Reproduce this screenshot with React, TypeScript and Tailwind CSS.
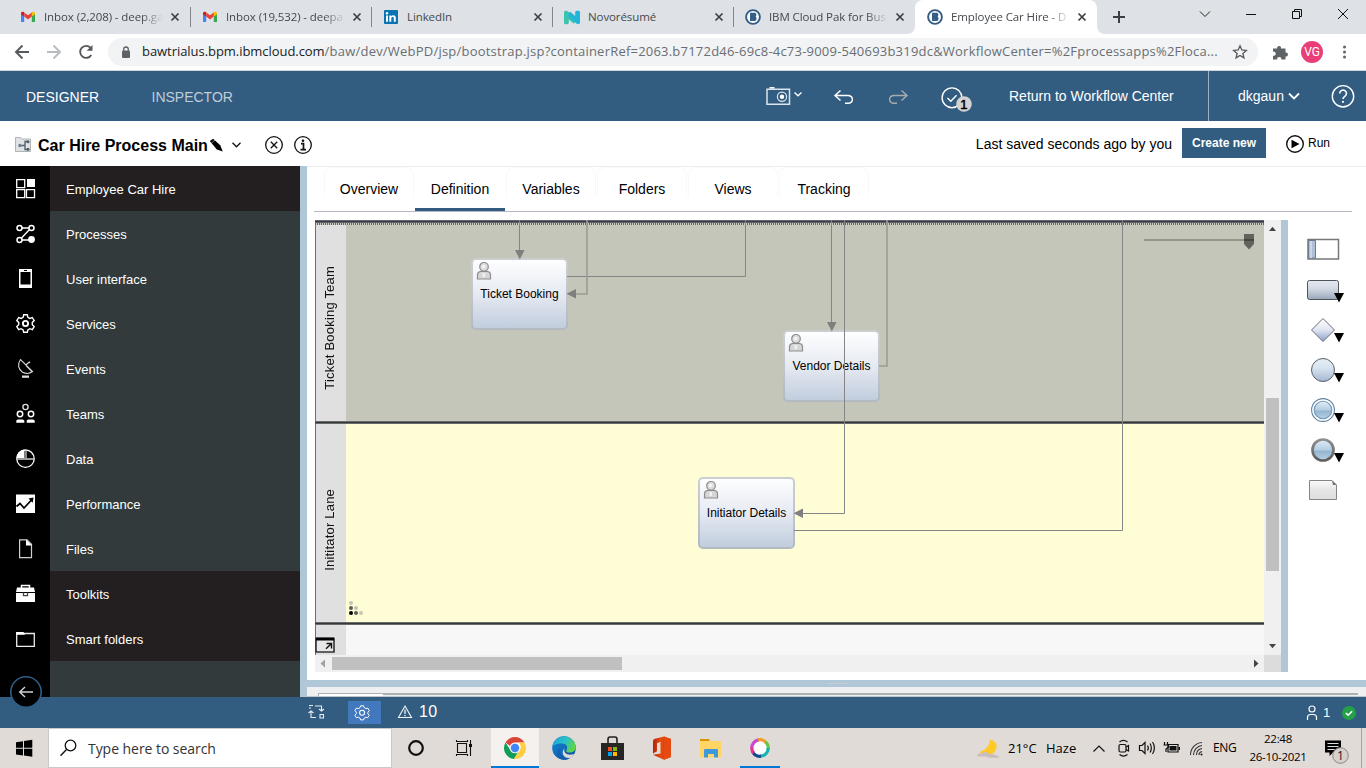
import React from 'react';

type IcoProps = { x?: number; y?: number; w: number; h: number; className?: string; children: React.ReactNode };

function Ico({ x = 0, y = 0, w, h, className = '', children }: IcoProps) {
  return (
    <svg width={w} height={h} viewBox={`${x} ${y} ${w} ${h}`} fill="none" className={`block shrink-0 ${className}`}>
      {children}
    </svg>
  );
}

/* ---------- Browser chrome ---------- */

const Gmail = () => (
  <Ico w={14} h={14}>
    <path d="M0 3.200v8.800h3.200V6z" fill="#4285f4" />
    <path d="M14 3.200v8.800h-3.200V6z" fill="#34a853" />
    <path d="M0 3.400C0 1.800 1.800 1.300 3 2.200l.2.2v4.200L0 4.300z" fill="#c5221f" />
    <path d="M14 3.400c0-1.600-1.800-2.100-3-1.200l-.2.2v4.200L14 4.300z" fill="#fbbc04" />
    <path d="M3.200 2.400 7 5.200l3.800-2.800v4.200L7 9.400 3.200 6.600z" fill="#ea4335" />
  </Ico>
);

const LinkedIn = () => (
  <Ico w={14} h={14}>
    <rect width="14" height="14" rx="1" fill="#0a73b1" />
    <path d="M2 5.400h2v6.400H2zM5.300 5.400h1.900v.9c.4-.7 1.100-1.100 2-1.100 2 0 2.600 1.200 2.600 3v3.600h-2V8.600c0-1-.2-1.700-1.100-1.700-1 0-1.400.7-1.400 1.700v3.200h-2z" fill="#fff" />
    <circle cx="3" cy="3.300" r="1.200" fill="#fff" />
  </Ico>
);

const Novo = () => (
  <Ico w={16} h={15}>
    <path d="M0 13V2.500C0 .8 2.500.2 4 1.400L11 8v4.500L9.500 13.500 4.800 9.500V13c0 1.800-4.800 1.800-4.800 0z" fill="#3cc3b0" />
    <path d="M16 2v10.500c0 1.700-2.300 2.300-3.500 1.100L4.800 7V2.500L6.500 2l4.700 4V2c0-1.700 4.800-1.700 4.800 0z" fill="#21b6d7" />
  </Ico>
);

const IbmB = () => (
  <Ico w={16} h={16}>
    <circle cx="8" cy="8" r="6.900" fill="#fff" stroke="#325c86" strokeWidth="1.900" />
    <path d="M5 3.800h4.500c2 0 2.500 2.800 1 4 1.800 1 1.200 4.300-1.200 4.300H5z" fill="#325c86" />
    <path d="M5.500 5.900h3M5.500 10h3" stroke="#4f7499" strokeWidth=".6" />
  </Ico>
);

const tabs = [
  { icon: <Gmail />, title: 'Inbox (2,208) - deep.ga', fade: true },
  { icon: <Gmail />, title: 'Inbox (19,532) - deepa', fade: true },
  { icon: <LinkedIn />, title: 'LinkedIn', fade: false },
  { icon: <Novo />, title: 'Novorésumé', fade: false },
  { icon: <IbmB />, title: 'IBM Cloud Pak for Bus', fade: true },
  { icon: <IbmB />, title: 'Employee Car Hire - D', fade: true },
];

function TabStrip() {
  return (
    <div className="flex h-[34px] bg-[#dee1e6] pl-[9px]">
      {tabs.map((t, i) => {
        const active = i === 5;
        const shell = active
          ? 'relative flex h-full w-[182px] items-center rounded-t-lg bg-white pl-[12px]'
          : i === 0
            ? 'relative flex h-full w-[182px] items-center pl-[11px]'
            : 'relative flex h-full w-[181px] items-center pl-[11px]';
        return (
          <div key={i} className={shell}>
            {active && (
              <Ico w={198} h={8} className="absolute -left-2 bottom-0">
                <path d="M0 8c4.500 0 8-3.500 8-8v8zM198 8c-4.500 0-8-3.500-8-8v8z" fill="#fff" />
              </Ico>
            )}
            <div className="flex w-4 justify-center">{t.icon}</div>
            <div
              className={
                t.fade
                  ? 'ml-2 w-[119px] overflow-hidden text-[11.5px] tracking-[-0.1px] whitespace-nowrap text-[#45494d] [mask-image:linear-gradient(to_right,black_82%,transparent)]'
                  : 'ml-2 w-[119px] overflow-hidden text-[11.5px] tracking-[-0.1px] whitespace-nowrap text-[#45494d]'
              }
            >
              {t.title}
            </div>
            <Ico w={10} h={10} className="ml-[7px]">
              <path d="M1.500 1.500l7 7M8.500 1.500l-7 7" stroke="#3c4043" strokeWidth="1.700" />
            </Ico>
            {i < 4 && <div className="absolute top-[7px] right-0 h-5 w-px bg-[#82868b]" />}
          </div>
        );
      })}
      <Ico x={1097} y={0} w={269} h={34}>
        <path d="M1119 11v12M1113 17h12" stroke="#3c4043" strokeWidth="2" />
        <path d="M1200 11.500l5 5 5-5" stroke="#222" />
        <path d="M1246 14.500h10" stroke="#111" />
        <path d="M1292.500 11.500h7v7h-7zM1294.500 11v-1.500h7v7h-1.500" stroke="#111" />
        <path d="M1338 9l10 10M1348 9l-10 10" stroke="#111" />
      </Ico>
    </div>
  );
}

function Toolbar() {
  return (
    <div className="flex h-[37px] items-center border-b border-[#d3d6d9] bg-white">
      <Ico x={0} y={34} w={108} h={36}>
        <path d="M29 52H16.500M22.500 45.500L16 52l6.500 6.500" stroke="#55595d" strokeWidth="1.900" />
        <path d="M47 52h12.500M53.500 45.500L60 52l-6.500 6.500" stroke="#b9bcbf" strokeWidth="1.900" />
        <path d="M91.300 55a6 6 0 1 1-.8-7.300" stroke="#55595d" strokeWidth="1.900" />
        <path d="M92.500 45v5.800h-5.800z" fill="#55595d" />
      </Ico>
      <div className="flex h-7 w-[1150px] items-center rounded-full bg-[#f1f3f4] pl-[13px]">
        <Ico w={10} h={13}>
          <rect x="1" y="4.500" width="8" height="7.500" rx="1" fill="#5f6368" />
          <path d="M2.700 5V3.300a2.300 2.300 0 0 1 4.600 0V5" stroke="#5f6368" strokeWidth="1.300" />
        </Ico>
        <div className="ml-[11px] w-[1088px] text-[13px] tracking-[0.215px] whitespace-nowrap text-[#6a6e73]">
          <span className="tracking-[-0.05px] text-[#202124]">bawtrialus.bpm.ibmcloud.com</span>
          /baw/dev/WebPD/jsp/bootstrap.jsp?containerRef=2063.b7172d46-69c8-4c73-9009-540693b319dc&amp;WorkflowCenter=%2Fprocessapps%2Floca...
        </div>
        <Ico w={16} h={16} className="ml-[2px]">
          <path d="M8 1.800l1.800 4.200 4.500.4-3.400 3 1 4.400L8 11.500l-3.900 2.300 1-4.400-3.400-3L6.200 6z" stroke="#55595d" strokeWidth="1.300" />
        </Ico>
      </div>
      <Ico x={1258} y={34} w={108} h={36}>
        <path d="M1273 48.500h4.200a2 2 0 1 1 3.800 0h4.500v4a2 2 0 1 1 0 3.900v3.100h-4.300a2 2 0 1 0-3.900 0H1273v-3.800a2.100 2.100 0 1 0 0-4z" fill="#5f6368" />
        <circle cx="1312" cy="52" r="11" fill="#ea3f76" />
        <text x="1312" y="56.300" fontSize="12" textAnchor="middle" fill="#fff" fontFamily="Roboto, sans-serif">VG</text>
        <circle cx="1344.500" cy="47" r="1.500" fill="#5f6368" />
        <circle cx="1344.500" cy="52" r="1.500" fill="#5f6368" />
        <circle cx="1344.500" cy="57" r="1.500" fill="#5f6368" />
      </Ico>
    </div>
  );
}

/* ---------- Designer header ---------- */

function DesignerHeader() {
  return (
    <div className="flex h-[50px] items-center bg-[#325c80] text-[14px] text-white">
      <div className="ml-[26px] w-[125.5px] pt-[3px]">DESIGNER</div>
      <div className="w-[608.5px] pt-[3px] text-[#c0ccd8]">INSPECTOR</div>
      <Ico x={760} y={71} w={249} h={50}>
        <path d="M767 89.200h22.500v15H767z" stroke="#dbe4ec" strokeWidth="1.500" />
        <path d="M769.500 87.800h5" stroke="#fff" strokeWidth="1.500" />
        <circle cx="782" cy="96.800" r="4.600" stroke="#dfe7ee" strokeWidth="1.200" />
        <circle cx="782" cy="96.800" r="2.200" fill="#fff" />
        <path d="M794.500 92.500l3.500 3.300 3.500-3.300" stroke="#fff" strokeWidth="1.300" />
        <path d="M840.500 90.500l-5.500 5 5.500 5M835.500 95.500h13a5 4 0 0 1 0 7.800H845" stroke="#fff" strokeWidth="1.500" />
        <path d="M901.500 90.500l5.500 5-5.500 5M906.500 95.500h-13a5 4 0 0 0 0 7.800H897" stroke="#a9acae" strokeWidth="1.400" />
        <circle cx="952" cy="97.800" r="9.900" stroke="#fff" strokeWidth="1.400" />
        <path d="M947.500 98l3.300 3.200 5.800-6" stroke="#fff" strokeWidth="1.400" />
        <circle cx="964" cy="104" r="7.800" fill="#d2d2d2" />
        <text x="963.800" y="108.800" fontSize="13" textAnchor="middle" fill="#000" stroke="#000" strokeWidth=".5">1</text>
      </Ico>
      <div className="w-[199px]">Return to Workflow Center</div>
      <div className="h-full w-px bg-[#9fb1c1]" />
      <div className="ml-[29px]">dkgaun</div>
      <Ico x={1284} y={71} w={82} h={50} className="ml-auto">
        <path d="M1289 93.500l5 5 5-5" stroke="#fff" strokeWidth="1.800" />
        <circle cx="1343" cy="96.300" r="10.700" stroke="#fff" strokeWidth="1.400" />
        <path d="M1339.700 93.500a3.400 3.300 0 1 1 5.300 2.600c-1.300.9-2 1.500-2 3" stroke="#fff" strokeWidth="1.600" />
        <circle cx="1343" cy="101.800" r="1.100" fill="#fff" />
      </Ico>
    </div>
  );
}

function TitleRow() {
  return (
    <div className="flex h-[45px] items-center bg-white text-black">
      <Ico x={14} y={136} w={18} h={18} className="ml-[14px]">
        <path d="M15.500 152.500v-14h5l1 1.500h9v12.500z" fill="#dfe1e4" stroke="#b0b3b6" />
        <path d="M21.500 146.500h3M28.500 142.500H25v8h3.500" stroke="#4e5c6b" strokeWidth="1.300" />
        <circle cx="20" cy="146.500" r="1.700" fill="#6d7a88" />
        <circle cx="28" cy="142.800" r="1.500" fill="#4e5c6b" />
        <circle cx="28" cy="150.300" r="1.500" fill="#4e5c6b" />
      </Ico>
      <div className="ml-[6px] w-[170px] pt-[4px] text-[16px] leading-5 font-bold whitespace-nowrap">Car Hire Process Main</div>
      <Ico x={208} y={121} w={110} h={45}>
        <path d="M209.800 141l3.400-2.200 7 6.500 2.600 6.200-6-2z" fill="#000" />
        <path d="M211.500 143l3.500-3" stroke="#fff" strokeWidth=".5" />
        <path d="M232.500 142.800l4 4 4-4" stroke="#111" strokeWidth="1.300" />
        <circle cx="274" cy="145" r="8.300" stroke="#111" strokeWidth="1.300" />
        <path d="M270.800 141.800l6.400 6.400M277.200 141.800l-6.400 6.400" stroke="#111" strokeWidth="1.300" />
        <circle cx="303" cy="145" r="8.300" stroke="#111" strokeWidth="1.300" />
        <path d="M301 143.700h2.500v6M300.500 149.700h5.500" stroke="#111" strokeWidth="1.700" />
        <circle cx="303" cy="140.800" r="1.300" fill="#111" />
      </Ico>
      <div className="ml-auto pt-[2px] text-[14px]">Last saved seconds ago by you</div>
      <div className="mt-[7px] mr-5 ml-[10px] flex h-[30px] w-[84px] items-center justify-center self-start bg-[#325c80] text-[12px] font-bold text-white">Create new</div>
      <Ico x={1286} y={134} w={18} h={20}>
        <circle cx="1295" cy="144" r="8.300" stroke="#111" strokeWidth="1.400" />
        <path d="M1291.500 139.800l8 4.200-8 4.200z" fill="#000" />
      </Ico>
      <div className="mr-[36px] ml-1 pb-px text-[12px]">Run</div>
    </div>
  );
}

/* ---------- Side navigation ---------- */

const navItems = [
  { label: 'Employee Car Hire', dark: true, icon: (
    <>
      <path d="M16.700 13.700h8v8h-8zM16.700 23.700h8v8h-8zM26.500 23.700h8v8h-8z" stroke="#fff" strokeWidth="1.300" />
      <path d="M27 13h8v8h-8z" fill="#fff" />
    </>
  ) },
  { label: 'Processes', dark: false, icon: (
    <>
      <path d="M22 17h7M29.500 18.500l-8 8.500M22 29h7" stroke="#fff" strokeWidth="1.400" />
      <circle cx="19.500" cy="17" r="2.500" stroke="#fff" strokeWidth="1.500" />
      <circle cx="31.500" cy="17" r="2.500" stroke="#fff" strokeWidth="1.500" />
      <circle cx="19.500" cy="29" r="2.500" stroke="#fff" strokeWidth="1.500" />
      <circle cx="31.500" cy="28.500" r="3.400" fill="#fff" />
    </>
  ) },
  { label: 'User interface', dark: false, icon: (
    <>
      <path d="M19 13h13v19H19z" fill="#fff" />
      <path d="M20.500 16h10v12.500h-10z" fill="#000" />
      <path d="M24 14.500h3" stroke="#000" />
    </>
  ) },
  { label: 'Services', dark: false, icon: (
    <>
      <path d="M23.700 13.800h3.600l.6 2.500 2 1.100 2.400-.9 1.900 3.100-1.900 1.800v2.300l1.900 1.800-1.900 3.100-2.400-.9-2 1.200-.6 2.400h-3.600l-.6-2.400-2-1.200-2.400.9-1.900-3.100 1.900-1.800v-2.300l-1.900-1.800 1.900-3.100 2.400.9 2-1.100z" stroke="#fff" strokeWidth="1.400" />
      <circle cx="25.500" cy="22.500" r="2.600" stroke="#fff" strokeWidth="1.900" />
    </>
  ) },
  { label: 'Events', dark: false, icon: (
    <>
      <path d="M20.500 13.500c-3.500 5-2 10 2 12.800 4 1.800 7.500 1.300 10-.8zM25.800 19l3.700-3M26 19.500l5.500 5.500M29 15.500l1 1.500" stroke="#d8d8d8" strokeWidth="1.100" />
      <path d="M22 29.500h7v2.300h-7z" fill="#ddd" />
    </>
  ) },
  { label: 'Teams', dark: false, icon: (
    <>
      <circle cx="25.500" cy="16" r="2.600" stroke="#ddd" strokeWidth="1.400" />
      <circle cx="20" cy="23" r="2.700" stroke="#fff" strokeWidth="1.500" />
      <circle cx="31" cy="23" r="2.700" stroke="#fff" strokeWidth="1.500" />
      <path d="M16.300 31.800v-2.300l1.500-1h5l1.500 1v2.300zM26.700 31.800v-2.300l1.500-1h5l1.500 1v2.300z" fill="#fff" />
    </>
  ) },
  { label: 'Data', dark: false, icon: (
    <>
      <circle cx="25.500" cy="22.700" r="8.700" stroke="#fff" strokeWidth="1.300" />
      <path d="M24.500 22V13.600a9 9 0 0 0-8 8.400z" fill="#fff" />
      <path d="M17 23h17.500M26 14v8" stroke="#ccc" strokeWidth="1.300" />
    </>
  ) },
  { label: 'Performance', dark: false, icon: (
    <>
      <path d="M16 13.500h19v18.500H16z" fill="#fff" />
      <path d="M16.500 25.500l3.500-3 4 4.500 7.500-8" stroke="#000" strokeWidth="1.800" />
      <path d="M28.500 17.500l5-1-.8 5.200z" fill="#000" />
    </>
  ) },
  { label: 'Files', dark: false, icon: (
    <>
      <path d="M19.600 13.800h7.400l4.500 4.500v13.300H19.600z" stroke="#cfcfcf" strokeWidth="1.200" />
      <path d="M26 13.500l6 6h-6z" fill="#fff" />
    </>
  ) },
  { label: 'Toolkits', dark: true, icon: (
    <>
      <path d="M21.500 17v-2.500h8V17" stroke="#fff" strokeWidth="1.500" />
      <path d="M17 16.500h17l1 4.500H16zM16 22h19v9H16z" fill="#fff" />
      <path d="M23.500 21.500v3.200h4v-3.200" stroke="#444" strokeWidth="1.300" />
    </>
  ) },
  { label: 'Smart folders', dark: true, icon: (
    <>
      <path d="M16.700 17.500h17.600v12.800H16.700z" stroke="#ececec" strokeWidth="1.300" />
      <path d="M16 16h7.500l1.500 2.800h-9z" fill="#fff" />
    </>
  ) },
];

function SideNav() {
  return (
    <div className="relative z-10 flex h-full w-[300px] shrink-0 flex-col bg-[#323a3b]">
      {navItems.map((n) => (
        <div key={n.label} className="flex h-[45px]">
          <Ico w={50} h={45} className="bg-black">{n.icon}</Ico>
          <div className={n.dark ? 'flex flex-1 items-center bg-[#231f20] pt-[3px] pl-4 text-[13px] text-white' : 'flex flex-1 items-center pt-[3px] pl-4 text-[13px] text-white'}>{n.label}</div>
        </div>
      ))}
      <div className="w-[50px] flex-1 bg-black" />
      <Ico w={34} h={34} className="absolute top-[509px] left-[9px]">
        <circle cx="17" cy="17" r="15.200" fill="#000" stroke="#2f5f88" strokeWidth="1.600" />
        <path d="M24 17H11M16 12l-5.300 5 5.300 5" stroke="#cfd3d6" strokeWidth="1.400" />
      </Ico>
    </div>
  );
}

/* ---------- Diagram ---------- */

const nodes = [
  { label: 'Ticket Booking', pos: 'left-[156px] top-[38px]' },
  { label: 'Vendor Details', pos: 'left-[468px] top-[110px]' },
  { label: 'Initiator Details', pos: 'left-[383px] top-[257px]' },
];

function LaneLabel({ text, className }: { text: string; className: string }) {
  return (
    <div className={`flex w-[31px] shrink-0 items-center justify-center border-l border-[#6f6f6f] bg-[#e0e0e0] pr-[3px] ${className}`}>
      <span className="rotate-180 text-[13px] tracking-[0.2px] whitespace-nowrap text-[#111] [writing-mode:vertical-rl]">{text}</span>
    </div>
  );
}

function Diagram() {
  return (
    <div className="relative flex h-[435px] w-[949px] flex-col overflow-hidden">
      <div className="h-[3px] border-y border-[#60636a] bg-[#3c3f49]" />
      <div className="h-[2px] bg-[repeating-linear-gradient(90deg,#66645f_0px,#66645f_1px,#cfcfc8_1px,#cfcfc8_2px)]" />
      <div className="flex h-[196px] bg-[#c5c6ba]">
        <LaneLabel text="Ticket Booking Team" className="pt-[10px]" />
      </div>
      <div className="h-[3px] border-y border-[#696b6b] bg-[#34373c]" />
      <div className="flex h-[198px] bg-[#fffdd5]">
        <LaneLabel text="Inititator Lane" className="pt-[14px]" />
      </div>
      <div className="h-[3px] border-y border-[#696b6b] bg-[#34373c]" />
      <div className="flex h-[30px] bg-[#f7f7f7]">
        <div className="w-[31px] border-l border-[#6f6f6f] bg-[#e0e0e0]" />
      </div>

      {nodes.map((n) => (
        <div key={n.label} className={`absolute h-[72px] w-[97px] rounded-[5px] border-2 border-[#a9adb3]/60 bg-linear-to-b from-white via-[#e6eaf2] to-[#bfcbdc] bg-origin-border ${n.pos}`}>
          <Ico w={16} h={19} className="mt-px ml-[3px]">
            <path d="M1.500 18v-4c0-2.200 1.500-3.300 3.600-3.600h5.800c2.100.3 3.600 1.400 3.600 3.600v4z" fill="#d6d6d6" stroke="#8d8d8d" strokeWidth="1.200" />
            <circle cx="8" cy="5.800" r="4.300" fill="#dedede" stroke="#8d8d8d" strokeWidth="1.200" />
            <circle cx="7.500" cy="5.500" r="1.800" fill="#f4f4f4" />
            <path d="M6.500 12h2.500v4H6.500z" fill="#f0f0f0" />
          </Ico>
          <div className="mt-[6px] text-center text-[12px] leading-4 whitespace-nowrap text-black">{n.label}</div>
        </div>
      ))}

      <Ico x={315} y={220} w={949} h={435} className="absolute inset-0">
        <g stroke="#858585">
          <path d="M519.500 220v32M567 276.500h178.500V220M831.500 220v104M844.500 220v293.500H802M794 530.500h328.500V220" />
        </g>
        <path d="M587 220v74h-12M887 220v146h-8" stroke="#9b9b96" strokeWidth="1.600" />
        <g fill="#7f7f7f">
          <path d="M515 250h9.500l-4.700 9.500zM827 322h9.500l-4.700 9.500zM576 289v9.500l-9.500-4.700zM803 508.500v9.500l-9.500-4.700z" />
        </g>
        <path d="M1144 240h100" stroke="#95958d" strokeWidth="2" />
        <path d="M1244 234h10v10l-5 5.500-5-5.500z" fill="#62635d" />
        <path d="M1244 240h10" stroke="#45463f" strokeWidth="2" />
        <g>
          <circle cx="351" cy="603" r="2" fill="#c6c5b7" />
          <circle cx="351" cy="608" r="2" fill="#5d5c56" />
          <circle cx="356" cy="608" r="2" fill="#c3c2b6" />
          <circle cx="351" cy="613" r="2" fill="#000" />
          <circle cx="356" cy="613" r="2" fill="#5d5c56" />
          <circle cx="361" cy="613" r="2" fill="#c6c5b7" />
        </g>
        <path d="M316 638.500h18V652h-18z" fill="#e8e8e8" stroke="#333" strokeWidth="1.600" />
        <path d="M316 639h18" stroke="#000" strokeWidth="3" />
        <path d="M326.500 643.500h5v5M331 644l-5 4.800" stroke="#111" strokeWidth="1.400" />
      </Ico>
    </div>
  );
}

function Arrow({ x, y }: { x: number; y: number }) {
  return <path d={`M${x} ${y}h10l-5 9.500z`} fill="#000" />;
}

function Palette() {
  return (
    <div className="flex flex-col pt-[10px]">
      <svg width="0" height="0" className="absolute">
        <defs>
          <linearGradient id="gTask" x2="0" y2="1"><stop stopColor="#e4e8f0" /><stop offset=".4" stopColor="#d6dce6" /><stop offset="1" stopColor="#98a6ba" /></linearGradient>
          <linearGradient id="gGate" x2="0" y2="1"><stop stopColor="#fff" /><stop offset=".5" stopColor="#e0e5f2" /><stop offset="1" stopColor="#8a9ec8" /></linearGradient>
          <linearGradient id="gCirc" x2="0" y2="1"><stop stopColor="#e4eef6" /><stop offset=".4" stopColor="#d8e4ef" /><stop offset="1" stopColor="#a5b7d0" /></linearGradient>
          <linearGradient id="gBlue" x2="0" y2="1"><stop stopColor="#e2edf8" /><stop offset=".5" stopColor="#b4cee2" /><stop offset=".55" stopColor="#94b5d0" /><stop offset="1" stopColor="#b5d2e6" /></linearGradient>
          <linearGradient id="gNote" x2="0" y2="1"><stop stopColor="#fafafa" /><stop offset=".5" stopColor="#e6e6e6" /><stop offset="1" stopColor="#ddd" /></linearGradient>
          <linearGradient id="gRing" x2="0" y2="1"><stop stopColor="#8f8f8f" /><stop offset="1" stopColor="#5e5e5e" /></linearGradient>
        </defs>
      </svg>
      <Ico x={1288} y={230} w={78} h={40}>
        <path d="M1308 239.500h30.500v19.500H1308z" fill="#fff" stroke="#777" strokeWidth="1.500" />
        <path d="M1308.500 240.500h7v17.500h-7z" fill="#aebfd6" stroke="#6f7a8a" />
        <path d="M1311 241v17" stroke="#c9d6e6" strokeWidth="2" />
      </Ico>
      <Ico x={1288} y={270} w={78} h={40}>
        <rect x="1307.500" y="280.500" width="31" height="19" rx="2" fill="url(#gTask)" stroke="#4e5459" />
        <Arrow x={1334} y={293} />
      </Ico>
      <Ico x={1288} y={310} w={78} h={40}>
        <path d="M1323 318.500l11.500 11.500-11.500 11.500-11.500-11.500z" fill="url(#gGate)" stroke="#666b75" />
        <Arrow x={1334} y={333} />
      </Ico>
      <Ico x={1288} y={350} w={78} h={40}>
        <circle cx="1323" cy="370" r="11.500" fill="url(#gCirc)" stroke="#5a6068" />
        <Arrow x={1334} y={373} />
      </Ico>
      <Ico x={1288} y={390} w={78} h={40}>
        <circle cx="1323" cy="410" r="11.400" fill="#fff" stroke="#5d82a2" strokeWidth="1.100" />
        <circle cx="1323" cy="410" r="8.800" fill="url(#gBlue)" stroke="#7397b5" strokeWidth="1.100" />
        <Arrow x={1334} y={413} />
      </Ico>
      <Ico x={1288} y={430} w={78} h={40}>
        <circle cx="1323" cy="450" r="10.500" fill="url(#gBlue)" stroke="url(#gRing)" strokeWidth="2.700" />
        <Arrow x={1334} y={453} />
      </Ico>
      <Ico x={1288} y={470} w={78} h={40}>
        <path d="M1309.500 480.500h22.500l4.500 4.500v14.500h-27z" fill="url(#gNote)" stroke="#858585" />
        <path d="M1332 480.500l4.500 4.500h-3.500z" fill="#6f6f6f" />
      </Ico>
    </div>
  );
}

const editorTabs = ['Overview', 'Definition', 'Variables', 'Folders', 'Views', 'Tracking'];

function Editor() {
  return (
    <div className="flex min-w-0 flex-1 flex-col border-t border-[#ededed] bg-white">
      <div className="mr-[14px] ml-[7px] flex h-[45px] border-b border-[#b3b9c4] pl-[10px]">
        {editorTabs.map((t, i) => (
          <div
            key={t}
            className={
              i === 1
                ? 'mr-px flex h-[44px] w-[90px] items-center justify-center border-b-[3px] border-[#325c80] pt-[3px] text-[14px] text-black'
                : 'mr-px h-[30px] w-[90px] rounded-t-lg border-x border-t border-[#f9f9f9] text-center text-[14px] leading-[43px] text-black'
            }
          >
            {t}
          </div>
        ))}
      </div>
      <div className="mt-2 ml-2 flex h-[452px]">
        <div className="flex flex-col">
          <Diagram />
          <div className="flex h-[17px] w-[949px] items-center bg-[#f0f0f0]">
            <Ico w={17} h={17}><path d="M10 4.500v8L5.500 8.500z" fill="#a0a0a0" /></Ico>
            <div className="h-[13px] w-[290px] bg-[#c0c0c0]" />
            <Ico w={17} h={17} className="ml-auto"><path d="M7 4.500v8L11.500 8.500z" fill="#444" /></Ico>
          </div>
        </div>
        <div className="flex w-[17px] flex-col items-center bg-[#f0f0f0]">
          <Ico w={17} h={17}><path d="M5 11h7L8.500 6.800z" fill="#444" /></Ico>
          <div className="mt-[161px] h-[173px] w-[13px] bg-[#c0c0c0]" />
          <Ico w={17} h={17} className="mt-auto"><path d="M5 6h7l-3.500 4.200z" fill="#444" /></Ico>
          <div className="h-[17px] w-[17px] shrink-0 bg-[#dcdcdc]" />
        </div>
        <div className="w-[7px] bg-[#b0c7d8]" />
        <Palette />
      </div>
      <div className="mt-2 flex h-[7px] justify-center bg-[#b0c7d8]">
        <div className="mt-[3px] h-px w-5 bg-[#c9cdd3]" />
      </div>
      <div className="flex h-[10px] border-b border-[#c2c6cc] bg-[#efeef1] pt-[6px] pr-2 pl-[11px]">
        <div className="h-[3px] w-[65px] border-t border-l border-[#a9b3b5] bg-white" />
        <div className="h-[2px] flex-1 bg-[#a9b3b5]" />
      </div>
    </div>
  );
}

function StatusBar() {
  return (
    <div className="flex h-[31px] items-center bg-[#325c80] text-white">
      <Ico x={300} y={697} w={48} h={31} className="ml-[300px]">
        <path d="M309 705.500h4M309 708h2M315 706h6.500v4.500M319 709l2.500 2 2.500-2M308.500 713l2.500-2 2.500 2M311 711.500v6h5M320 714.500h3.500v3.500H320z" stroke="#e8edf1" strokeWidth="1.100" />
      </Ico>
      <Ico x={348} y={701} w={33} h={23} className="bg-[#4178be]">
        <path d="M360.600 705.800h3l.6 1.900 1.600.9 2-.5 1.500 2.500-1.400 1.500v1.600l1.400 1.500-1.500 2.500-2-.5-1.600.9-.6 1.800h-3l-.6-1.800-1.600-.9-2 .5-1.500-2.500 1.400-1.500v-1.600l-1.400-1.500 1.500-2.500 2 .5 1.600-.9z" stroke="#fff" strokeWidth="1" />
        <circle cx="362.100" cy="712.800" r="2.500" stroke="#fff" strokeWidth="1.100" />
      </Ico>
      <Ico x={381} y={697} w={38} h={31}>
        <path d="M405 706l6.500 11.500h-13z" stroke="#f0f3f5" strokeWidth="1.100" />
        <path d="M405 709.500v4.500M405 715v1.200" stroke="#fff" strokeWidth="1.200" />
      </Ico>
      <div className="pb-px text-[16px] tracking-[0.3px]">10</div>
      <Ico x={1304} y={697} w={18} h={31} className="ml-auto">
        <circle cx="1312" cy="709" r="3" stroke="#fff" strokeWidth="1.200" />
        <path d="M1307.500 720v-2.500c0-2 1.500-3 3-3h3c1.500 0 3 1 3 3v2.500" stroke="#fff" strokeWidth="1.200" />
      </Ico>
      <div className="w-5 pt-px pl-px text-[13px]">1</div>
      <Ico x={1342} y={697} w={24} h={31}>
        <circle cx="1349" cy="713" r="7" fill="#24a148" />
        <path d="M1345.800 713l2.300 2.200 4-4" stroke="#fff" strokeWidth="1.600" />
      </Ico>
    </div>
  );
}

/* ---------- Taskbar ---------- */

function Taskbar() {
  return (
    <div className="flex h-10 bg-[#e1dbd7] text-black">
      <Ico x={0} y={728} w={48} h={40}>
        <path d="M16 742.200l7-1v6.600h-7zM24 741l8.300-1.200v8H24zM16 748.800h7v6.600l-7-1zM24 748.800h8.300v8L24 755.600z" fill="#000" />
      </Ico>
      <div className="flex w-[344px] items-center border border-[#c9c9c9] bg-white">
        <Ico x={49} y={729} w={38} h={38}>
          <circle cx="70.500" cy="745.500" r="5.300" stroke="#111" strokeWidth="1.300" />
          <path d="M66.500 749.500l-6 6.300" stroke="#111" strokeWidth="1.400" />
        </Ico>
        <div className="ml-px text-[14px] tracking-[-0.05px] whitespace-nowrap text-[#333]">Type here to search</div>
      </div>
      <Ico x={392} y={728} w={99} h={40}>
        <circle cx="416" cy="748" r="6.800" stroke="#111" strokeWidth="2.200" />
        <path d="M457.500 743.500h9v9h-9zM456.500 740v1.500h11V740M456.500 756v-1.500h11V756M470.500 740v16" stroke="#111" strokeWidth="1.100" />
        <path d="M469 744h3v3h-3z" fill="#111" />
      </Ico>
      <Ico x={491} y={728} w={48} h={38} className="box-content border-b-2 border-[#0078d7] bg-[#f4f1ef]">
        <circle cx="515" cy="748" r="11" fill="#fff" />
        <path d="M505.500 742.500A11 11 0 0 1 524.500 742.500H515a5.500 5.500 0 0 0-5 3.500z" fill="#db4437" />
        <path d="M505.500 742.500A11 11 0 0 0 514 759l5-8.500a5 5 0 0 1-8.700-.5z" fill="#0f9d58" />
        <path d="M524.500 742.500A11 11 0 0 1 514 759l5.500-8.500a5.500 5.500 0 0 0-1-8z" fill="#ffcd40" />
        <circle cx="515" cy="748" r="5.300" fill="#f1f1f1" />
        <circle cx="515" cy="748" r="4.200" fill="#4285f4" />
      </Ico>
      <Ico x={539} y={728} w={201} h={40}>
        <defs>
          <linearGradient id="eTop" x1="0" x2="1" y2=".4"><stop stopColor="#1d9fe0" /><stop offset=".6" stopColor="#2cc2c5" /><stop offset="1" stopColor="#5ed34c" /></linearGradient>
          <linearGradient id="eBot" x2="1" y2="1"><stop stopColor="#1687d6" /><stop offset="1" stopColor="#0c4f9e" /></linearGradient>
          <linearGradient id="off" x2="1"><stop stopColor="#b3210a" /><stop offset=".4" stopColor="#e8490f" /><stop offset="1" stopColor="#d73b02" /></linearGradient>
        </defs>
        <circle cx="564" cy="748" r="11.800" fill="url(#eBot)" />
        <path d="M552.300 747a11.800 11.800 0 0 1 23.500 0c0 4-3 5.500-6 5.500-3.500 0-4-1.500-3.200-2.600 1.500-2 .5-6.400-4.600-6.400-5 0-8.700 1.500-9.700 3.500z" fill="url(#eTop)" />
        <path d="M564.500 748c-1.500 5 2.500 8 9.500 6-1 2-2 3-3.500 3.800-6 1.200-10.500-3.800-6-9.800z" fill="#e1dbd7" />
        <path d="M560.500 748c-3 5 1 11 9.500 10.200-2 1-4 1.600-6 1.600-7 0-8.500-8-3.500-11.800z" fill="#1560ae" />
        <path d="M601 743h23v17h-23z" fill="#262626" />
        <path d="M608 743v-3.500c0-2 1-2.500 2-2.500h5c1 0 2 .5 2 2.500v3.500" stroke="#222" strokeWidth="1.600" />
        <path d="M608 747h4v4h-4z" fill="#f25022" /><path d="M613 747h4v4h-4z" fill="#7fba00" />
        <path d="M608 752h4v4h-4z" fill="#00a4ef" /><path d="M613 752h4v4h-4z" fill="#ffb900" />
        <path d="M664 736.500l7 2.500v18l-7 2.700-11-5 7.500-1.200v-11.700l-3.500 1.500v8l-4 2.200v-11.500c0-2 .6-2.600 2-3.200z" fill="url(#off)" />
        <path d="M664 736.500l7 2.500v18l-7 2.700z" fill="#e54a12" />
        <path d="M700 739h9l1 2h-10z" fill="#d99500" />
        <path d="M700 741h21v16.500h-21z" fill="#ffd566" />
        <path d="M704 757.500v-7c0-1 .5-1.500 1.500-1.500h11c1 0 1.500.5 1.500 1.500v7h-4v-3.500h-6v3.500z" fill="#3f97dc" />
      </Ico>
      <Ico x={740} y={728} w={40} h={38} className="box-content border-b-2 border-[#0078d7]">
        <circle cx="760" cy="748" r="9.500" fill="#fff" />
        <path d="M751.800 748a8.200 8.200 0 0 1 7-8.200" stroke="#ca4bd0" strokeWidth="3.200" />
        <path d="M758 739.900a8.200 8.200 0 0 1 8.500 3.200" stroke="#ef9b2e" strokeWidth="3.200" />
        <path d="M765.500 741.900a8.200 8.200 0 0 1 2.500 8" stroke="#6dc24b" strokeWidth="3.200" />
        <path d="M768.200 748a8.200 8.200 0 0 1-8.200 8.200" stroke="#15b3b5" strokeWidth="3.200" />
        <path d="M761 756.200a8.200 8.200 0 0 1-8.400-4.600" stroke="#164a8f" strokeWidth="3.200" />
        <path d="M753.500 753a8.200 8.200 0 0 1-1.700-5.500" stroke="#e8308c" strokeWidth="3.200" />
      </Ico>
      <Ico x={970} y={728} w={38} h={40} className="ml-[190px]">
        <path d="M990 739.500c-1 6-3 10-10.500 12.500 4 5.500 15.500 4.500 17-4.500 1-4-2-7-6.500-8z" fill="#ffc928" />
        <path d="M977.500 756.500c-1-2.500 2-3.500 4-2.700 1.500-3 6-2.800 7 .2 4-1 6 .5 5 2.500zM987 757.800c0-2 3-2 4-1.800 2-2 7-1.500 8.500 1.800z" fill="#c9bebb" />
      </Ico>
      <div className="flex w-[85px] items-center pt-[2px] text-[13px] whitespace-nowrap">
        <span className="w-[38px]">21°C</span>
        <span>Haze</span>
      </div>
      <Ico x={1093} y={728} w={120} h={40}>
        <g stroke="#111" strokeWidth="1.200">
          <path d="M1093.500 751.500l5.500-5.500 5.500 5.500" />
          <rect x="1119" y="744.500" width="7" height="7.500" rx="1.500" />
          <path d="M1126 747l2.500-1.500v5.500l-2.500-1.500M1119.500 742c2.500-2 5.500-2 8 0M1119.500 754.500c2.500 2 5.500 2 8 0" />
          <path d="M1139.500 745.500h2.500l3-3v11l-3-3h-2.500zM1147.500 745.500c1 1.500 1 3.500 0 5M1150 743.500c1.800 2.500 1.800 6.500 0 9M1152.500 742c2.500 3.500 2.500 8.500 0 12" />
        </g>
        <path d="M1168 744.500h10v7.500h-10z" stroke="#111" strokeWidth="1.200" />
        <path d="M1169.500 746h7v4.500h-7z" fill="#111" />
        <path d="M1178.500 747h1.500v3h-1.500z" fill="#111" />
        <path d="M1164.500 742v3M1167.500 742v3M1163.500 745h5v2l-2.500 2v3" stroke="#111" strokeWidth="1.200" />
        <g stroke="#333" strokeWidth="1.100">
          <path d="M1190.500 755c0-7 5-12 11.500-12.500M1193.500 755c0-5 3.500-9 8.500-9.500M1196.500 755c0-3.500 2.500-6 5.500-6.500M1199 755c0-2 1-3 3-3.500" />
        </g>
        <circle cx="1201.500" cy="754.500" r="1" fill="#111" />
      </Ico>
      <div className="flex w-9 items-center pb-px text-[12px] tracking-[-0.35px]">ENG</div>
      <div className="flex w-[58px] flex-col items-center pt-[2px] text-[11.500px] leading-[18px] tracking-[-0.3px] whitespace-nowrap">
        <span>22:48</span>
        <span>26-10-2021</span>
      </div>
      <Ico x={1308} y={728} w={58} h={40} className="ml-px">
        <path d="M1325 740.500h16v12h-8l-3.500 3.500v-3.500h-4.500z" fill="#000" />
        <path d="M1327.500 743.500h11M1327.500 746.500h11M1327.500 749.500h7" stroke="#e1dbd7" strokeWidth="1.200" />
        <circle cx="1340.500" cy="755.500" r="7.800" fill="#d6d1cd" stroke="#8b8784" />
        <text x="1340.500" y="760" fontSize="12" textAnchor="middle" fill="#111">1</text>
        <path d="M1361.500 728v40" stroke="#aaa5a1" />
      </Ico>
    </div>
  );
}

export default function App() {
  return (
    <div className="flex h-[768px] w-[1366px] flex-col overflow-hidden bg-white font-['Liberation_Sans',Arial,sans-serif]">
      <div className="font-['Open_Sans','Segoe_UI',sans-serif]">
        <TabStrip />
        <Toolbar />
      </div>
      <DesignerHeader />
      <TitleRow />
      <div className="flex h-[531px]">
        <SideNav />
        <div className="w-[7px] shrink-0 bg-[#b0c7d8]" />
        <Editor />
      </div>
      <StatusBar />
      <div className="font-['Open_Sans','Segoe_UI',sans-serif]">
        <Taskbar />
      </div>
    </div>
  );
}
